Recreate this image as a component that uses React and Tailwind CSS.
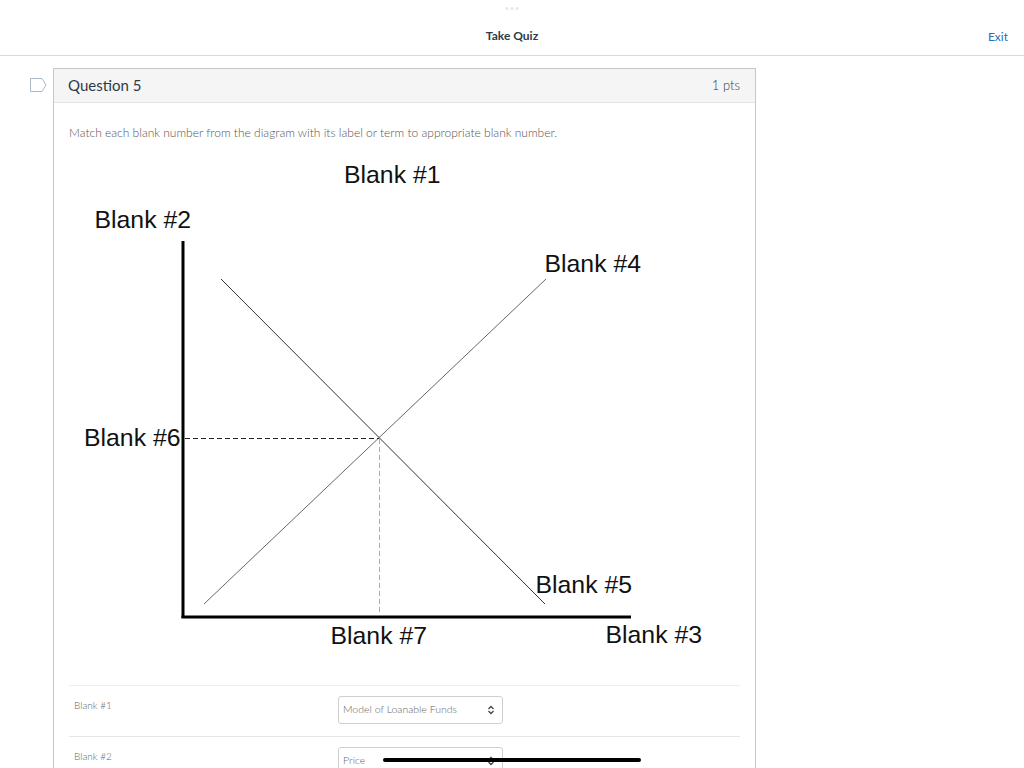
import React from "react";

function FlagIcon() {
  return (
    <svg width="17" height="14" viewBox="0 0 17 14" className="block">
      <path d="M0.5 0.5 H12 L16 7 L12 13.5 H0.5 Z" fill="none" stroke="#aab8c8" strokeWidth="1" />
    </svg>
  );
}

function Chevrons() {
  return (
    <svg width="8" height="10" viewBox="0 0 8 10" className="block">
      <path d="M1.5 4 L4 1.5 L6.5 4 M1.5 6 L4 8.5 L6.5 6" fill="none" stroke="#444" strokeWidth="1.3" />
    </svg>
  );
}

function LoanableFundsDiagram() {
  const label = { fontFamily: '"Liberation Sans", Arial, sans-serif', fontSize: 24.8, fill: "#111" };
  return (
    <svg width="672" height="530" viewBox="0 0 672 530" className="block">
      {/* axes */}
      <line x1="114" y1="90" x2="114" y2="467" stroke="#000" strokeWidth="3" />
      <line x1="112.5" y1="466" x2="562" y2="466" stroke="#000" strokeWidth="3" />
      {/* demand and supply */}
      <line x1="152" y1="128" x2="476" y2="453" stroke="#333" strokeWidth="1" />
      <line x1="135" y1="453" x2="477" y2="128" stroke="#666" strokeWidth="1" />
      {/* equilibrium guides */}
      <line x1="116" y1="287.5" x2="310" y2="287.5" stroke="#222" strokeWidth="1" strokeDasharray="5 3" />
      <line x1="310.5" y1="288" x2="310.5" y2="464" stroke="#aaa" strokeWidth="1" strokeDasharray="5 3" />
      <text x="275" y="32" style={label}>Blank #1</text>
      <text x="25.5" y="77" style={label}>Blank #2</text>
      <text x="475.5" y="121" style={label}>Blank #4</text>
      <text x="15" y="295" style={label}>Blank #6</text>
      <text x="466.5" y="442" style={label}>Blank #5</text>
      <text x="261.5" y="493" style={label}>Blank #7</text>
      <text x="536.5" y="492" style={label}>Blank #3</text>
    </svg>
  );
}

function MatchRow({ name, value, last }) {
  return (
    <div className={`flex h-[51px] ${last ? "" : "border-b border-[#e6e6e6]"}`}>
      <div className="w-[269px] pl-[5px] pt-[13px] text-[10px] leading-[12px] text-[#666] font-light">{name}</div>
      <div className="pt-[10px]">
        <div className="w-[165px] h-[28px] border border-[#cfcfcf] rounded-[3px] bg-white flex items-center justify-between pl-[4px] pr-[7px] text-[10.5px] text-[#666] font-light">
          <span>{value}</span>
          <Chevrons />
        </div>
      </div>
    </div>
  );
}

export default function App() {
  return (
    <div className="w-[1024px] h-[768px] overflow-hidden bg-white relative" style={{ fontFamily: 'Lato, "Open Sans", sans-serif' }}>
      {/* top bar */}
      <div className="h-[56px] border-b border-[#d9d9d9] relative flex items-center justify-center">
        <div className="absolute top-[7px] left-1/2 -translate-x-1/2 flex gap-[2px]">
          <span className="w-[3px] h-[3px] rounded-full bg-[#e6e6e6]" />
          <span className="w-[3px] h-[3px] rounded-full bg-[#e6e6e6]" />
          <span className="w-[3px] h-[3px] rounded-full bg-[#e6e6e6]" />
        </div>
        <div className="pt-[17px] text-[12px] font-bold text-[#2d3b45]">Take Quiz</div>
        <div className="absolute right-[16px] top-[28px] text-[12px] text-[#2a6eb8]">Exit</div>
      </div>

      {/* question area */}
      <div className="flex pl-[30px] pt-[12px]">
        <div className="w-[23px] pt-[10px]">
          <FlagIcon />
        </div>
        <div className="w-[703px] border border-[#c7c7c7] border-b-0">
          <div className="h-[34px] bg-[#f5f5f5] border-b border-[#e3e3e3] flex items-center justify-between pl-[14px] pr-[15px]">
            <span className="text-[15px] text-[#2d3b45]">Question 5</span>
            <span className="text-[13px] text-[#2d3b45] font-light">1 pts</span>
          </div>
          <div className="px-[15px] pt-[22px]">
            <p className="text-[12px] leading-[16px] text-[#555] font-light">
              Match each blank number from the diagram with its label or term to appropriate blank number.
            </p>
            <div className="mt-[10px]">
              <LoanableFundsDiagram />
            </div>
            <div className="mt-[4px] border-t border-[#eeeeee]">
              <MatchRow name="Blank #1" value="Model of Loanable Funds" />
              <MatchRow name="Blank #2" value="Price" last />
            </div>
          </div>
        </div>
      </div>

      {/* scrollbar indicator */}
      <div className="absolute left-[383px] top-[758px] w-[258px] h-[4px] rounded-full bg-black" />
    </div>
  );
}
